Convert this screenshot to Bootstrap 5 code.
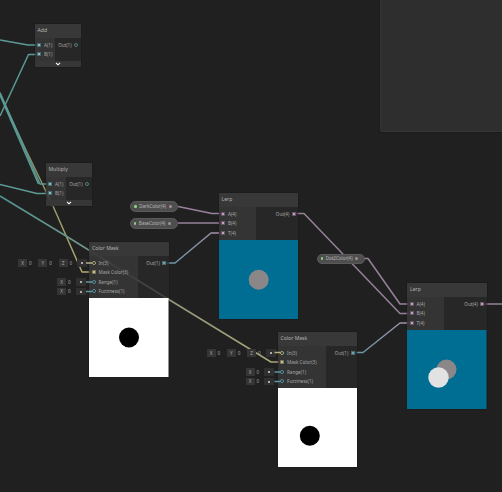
<!DOCTYPE html>
<html lang="en">
<head>
<meta charset="utf-8">
<title>Shader graph</title>
<link href="https://cdn.jsdelivr.net/npm/bootstrap@5.3.0/dist/css/bootstrap.min.css" rel="stylesheet">
<style>
body{background:#202020;font-family:"Noto Sans","Liberation Sans",sans-serif;font-size:4.6px;line-height:1;color:#a9a9a9}
.graph{width:502px;height:492px;background:#202020}
.wires{left:0;top:0;fill:none;stroke-width:1.5;stroke-linejoin:round}
.blackboard{left:379.5px;top:-4px;width:130px;height:135.5px;background:#2e2e2e;border:1px solid #353535;border-radius:2px;box-shadow:0 0 2px #151515}
.gnode{width:79.5px;box-shadow:0 0 1px #111}
.gnode.slim{width:46.5px}
.ghead{height:14px;padding-left:3px;background:rgba(57,57,57,.96);font-size:5.1px;color:#b4b4b4}
.gbody{background:rgba(42,42,42,.76)}
.ins{width:48.5px;padding:2.2px 0 2.2px 2.5px;background:rgba(62,62,62,.6)}
.lerp .ins{width:37px}
.slim .ins{width:20.5px}
.outs{padding:2.2px 2.5px 0 0}
.slim .outs{padding-right:3.2px}
.port{height:9.5px;gap:3px}
.outs .port{gap:2.2px}
.pin{width:4px;height:4px;border:1px solid #4d6a6c;background:var(--c);flex:none}
.pin.open{background:#202020;border-color:var(--c);border-radius:50%;opacity:.8}
.pink{--c:#c99cc3}.teal{--c:#7fc4c2}.blue{--c:#69a7b8}.gold{--c:#c8c48c}
.slim .outs{--c:#5a9a93}
.pink .pin{border-color:#67566a}
.gold .pin:not(.open){border-color:#77745a}
.gfoot{height:5.5px;background:#373737}
.preview{width:79.5px;height:79px;display:block}
.prop{width:48px;height:10.5px;border-radius:6px;background:#4e4e4e;border:1px solid #5a5a5a;padding:0 5px 0 3px}
.prop i{width:2.6px;height:2.6px;border-radius:50%;background:#8fd17a}
.prop b{width:3.4px;height:3.4px;border-radius:50%;background:#a08d9f}
.prop span{font-size:4.6px;color:#b5b5b5;letter-spacing:-.05px}
.fields{height:8px}
.axis{width:9px;height:7.5px;background:#353535}
.val{width:11.3px;height:7.5px;padding-left:2px}
.knob{width:10px;height:7.5px;background:#303030}
.knob::after{content:"";width:2px;height:2px;border-radius:50%;background:#d6d6d6}
.axis+.val:nth-last-child(2){margin-right:-1.6px}
</style>
<script src="https://cdn.jsdelivr.net/npm/bootstrap@5.3.0/dist/js/bootstrap.bundle.min.js"></script>
</head>
<body class="m-0 overflow-hidden">
<main class="graph position-relative overflow-hidden">
<svg class="wires position-absolute" width="502" height="492" viewBox="0 0 502 492">
<defs>
<linearGradient id="g1" gradientUnits="userSpaceOnUse" x1="164" y1="0" x2="222" y2="0"><stop stop-color="#6295a8"/><stop offset="1" stop-color="#a890a6"/></linearGradient>
<linearGradient id="g2" gradientUnits="userSpaceOnUse" x1="352" y1="0" x2="411" y2="0"><stop stop-color="#6295a8"/><stop offset="1" stop-color="#a890a6"/></linearGradient>
<linearGradient id="g3" gradientUnits="userSpaceOnUse" x1="0" y1="0" x2="280" y2="0"><stop stop-color="#4f9590"/><stop offset=".35" stop-color="#78958c"/><stop offset=".65" stop-color="#99997e"/><stop offset="1" stop-color="#a9a578"/></linearGradient>
<linearGradient id="g4" gradientUnits="userSpaceOnUse" x1="0" y1="93" x2="0" y2="272"><stop stop-color="#5ba39b"/><stop offset=".35" stop-color="#838e62"/><stop offset="1" stop-color="#b0a970"/></linearGradient>
</defs>
<path stroke="url(#g4)" d="M0 94L25 148L53 206L82 272H93"/>
<g stroke="#5b9a95"><path d="M0 40L28 45H38"/><path d="M0 116L28.500 54.500H38"/><path d="M0 92.500L40 184H49"/><path d="M0 95L38.500 184"/><path d="M0 184.500L37 193.500H49"/></g>
<path stroke="url(#g3)" d="M0 196L66 236L168 299L271 362H281"/>
<path stroke="url(#g1)" d="M164 263H175L211 233H222"/>
<path stroke="url(#g2)" d="M352 352.500H363L400 323H411"/>
<g stroke="#97819a"><path d="M178 206.500L212 213.500H222"/><path d="M178 223H222"/><path d="M293 213.500H304L400 313.500H411"/><path d="M357 258.500H368L400 304H411"/><path d="M481 304H502"/></g>
</svg>
<aside class="blackboard position-absolute"></aside>

<section class="gnode slim position-absolute" style="left:34.5px;top:24px">
<div class="ghead d-flex align-items-center">Add</div>
<div class="gbody d-flex justify-content-between"><div class="ins teal"><div class="port d-flex align-items-center"><i class="pin"></i>A(1)</div><div class="port d-flex align-items-center"><i class="pin"></i>B(1)</div></div><div class="outs"><div class="port d-flex align-items-center">Out(1)<i class="pin open"></i></div></div></div>
<div class="gfoot d-flex justify-content-center align-items-center"><svg width="6" height="4" viewBox="0 0 6 4"><path d="M1 .8L3 2.800L5 .8" fill="none" stroke="#fff" stroke-width="1.1"/></svg></div>
</section>

<section class="gnode slim position-absolute" style="left:45.5px;top:163px">
<div class="ghead d-flex align-items-center">Multiply</div>
<div class="gbody d-flex justify-content-between"><div class="ins teal"><div class="port d-flex align-items-center"><i class="pin"></i>A(1)</div><div class="port d-flex align-items-center"><i class="pin"></i>B(1)</div></div><div class="outs"><div class="port d-flex align-items-center">Out(1)<i class="pin open"></i></div></div></div>
<div class="gfoot d-flex justify-content-center align-items-center"><svg width="6" height="4" viewBox="0 0 6 4"><path d="M1 .8L3 2.800L5 .8" fill="none" stroke="#fff" stroke-width="1.1"/></svg></div>
</section>

<section class="gnode position-absolute" style="left:89px;top:242px">
<div class="ghead d-flex align-items-center">Color Mask</div>
<div class="gbody d-flex justify-content-between"><div class="ins"><div class="port gold d-flex align-items-center"><i class="pin open"></i>In(3)</div><div class="port gold d-flex align-items-center"><i class="pin"></i>Mask Color(3)</div><div class="port blue d-flex align-items-center"><i class="pin open"></i>Range(1)</div><div class="port blue d-flex align-items-center"><i class="pin open"></i>Fuzziness(1)</div></div><div class="outs blue"><div class="port d-flex align-items-center">Out(1)<i class="pin"></i></div></div></div>
<svg class="preview" viewBox="0 0 79.500 79"><rect width="79.500" height="79" fill="#fff"/><circle cx="40" cy="39.500" r="10" fill="#000"/></svg>
</section>

<section class="gnode lerp position-absolute" style="left:218.5px;top:193px">
<div class="ghead d-flex align-items-center">Lerp</div>
<div class="gbody d-flex justify-content-between"><div class="ins pink"><div class="port d-flex align-items-center"><i class="pin"></i>A(4)</div><div class="port d-flex align-items-center"><i class="pin"></i>B(4)</div><div class="port d-flex align-items-center"><i class="pin"></i>T(4)</div></div><div class="outs pink"><div class="port d-flex align-items-center">Out(4)<i class="pin"></i></div></div></div>
<svg class="preview" viewBox="0 0 79.500 79"><rect width="79.500" height="79" fill="#006e93"/><circle cx="39.700" cy="39.700" r="10" fill="#8b8789"/></svg>
</section>

<section class="gnode position-absolute" style="left:277.5px;top:332px">
<div class="ghead d-flex align-items-center">Color Mask</div>
<div class="gbody d-flex justify-content-between"><div class="ins"><div class="port gold d-flex align-items-center"><i class="pin open"></i>In(3)</div><div class="port gold d-flex align-items-center"><i class="pin"></i>Mask Color(3)</div><div class="port blue d-flex align-items-center"><i class="pin open"></i>Range(1)</div><div class="port blue d-flex align-items-center"><i class="pin open"></i>Fuzziness(1)</div></div><div class="outs blue"><div class="port d-flex align-items-center">Out(1)<i class="pin"></i></div></div></div>
<svg class="preview" viewBox="0 0 79.500 79"><rect width="79.500" height="79" fill="#fff"/><circle cx="31.800" cy="47.700" r="10" fill="#000"/></svg>
</section>

<section class="gnode lerp position-absolute" style="left:407px;top:283px">
<div class="ghead d-flex align-items-center">Lerp</div>
<div class="gbody d-flex justify-content-between"><div class="ins pink"><div class="port d-flex align-items-center"><i class="pin"></i>A(4)</div><div class="port d-flex align-items-center"><i class="pin"></i>B(4)</div><div class="port d-flex align-items-center"><i class="pin"></i>T(4)</div></div><div class="outs pink"><div class="port d-flex align-items-center">Out(4)<i class="pin"></i></div></div></div>
<svg class="preview" viewBox="0 0 79.500 79"><rect width="79.500" height="79" fill="#006e93"/><circle cx="39.500" cy="39.500" r="10" fill="#8b8789"/><circle cx="31.500" cy="47.500" r="10.200" fill="#e2e2e2"/></svg>
</section>

<div class="prop position-absolute d-flex align-items-center justify-content-between" style="left:130px;top:201px"><i></i><span>DarkColor(4)</span><b></b></div>
<div class="prop position-absolute d-flex align-items-center justify-content-between" style="left:129.5px;top:218px"><i></i><span>BaseColor(4)</span><b></b></div>
<div class="prop position-absolute d-flex align-items-center justify-content-between" style="left:316.5px;top:253.5px"><i></i><span>Dot2Color(4)</span><b></b></div>

<div class="fields position-absolute d-flex align-items-center" style="left:18px;top:259px"><span class="axis d-flex align-items-center justify-content-center">X</span><span class="val d-flex align-items-center">0</span><span class="axis d-flex align-items-center justify-content-center">Y</span><span class="val d-flex align-items-center">0</span><span class="axis d-flex align-items-center justify-content-center">Z</span><span class="val d-flex align-items-center">0</span><span class="knob d-flex align-items-center justify-content-center"></span></div>
<div class="fields position-absolute d-flex align-items-center" style="left:57px;top:278px"><span class="axis d-flex align-items-center justify-content-center">X</span><span class="val d-flex align-items-center">0</span><span class="knob d-flex align-items-center justify-content-center"></span></div>
<div class="fields position-absolute d-flex align-items-center" style="left:57px;top:287.5px"><span class="axis d-flex align-items-center justify-content-center">X</span><span class="val d-flex align-items-center">0</span><span class="knob d-flex align-items-center justify-content-center"></span></div>
<div class="fields position-absolute d-flex align-items-center" style="left:206.5px;top:349px"><span class="axis d-flex align-items-center justify-content-center">X</span><span class="val d-flex align-items-center">0</span><span class="axis d-flex align-items-center justify-content-center">Y</span><span class="val d-flex align-items-center">0</span><span class="axis d-flex align-items-center justify-content-center">Z</span><span class="val d-flex align-items-center">0</span><span class="knob d-flex align-items-center justify-content-center"></span></div>
<div class="fields position-absolute d-flex align-items-center" style="left:245.5px;top:368px"><span class="axis d-flex align-items-center justify-content-center">X</span><span class="val d-flex align-items-center">0</span><span class="knob d-flex align-items-center justify-content-center"></span></div>
<div class="fields position-absolute d-flex align-items-center" style="left:245.5px;top:377.5px"><span class="axis d-flex align-items-center justify-content-center">X</span><span class="val d-flex align-items-center">0</span><span class="knob d-flex align-items-center justify-content-center"></span></div>
<svg class="wires position-absolute" width="502" height="492" viewBox="0 0 502 492"><g stroke="#b5b084"><path d="M86 263H92"/><path d="M274.500 352.500H280.500"/></g><g stroke="#5d97a3"><path d="M86 282H92M86 291.500H92M274.500 372H280.500M274.500 381.500H280.500"/></g></svg>
</main>
</body>
</html>
